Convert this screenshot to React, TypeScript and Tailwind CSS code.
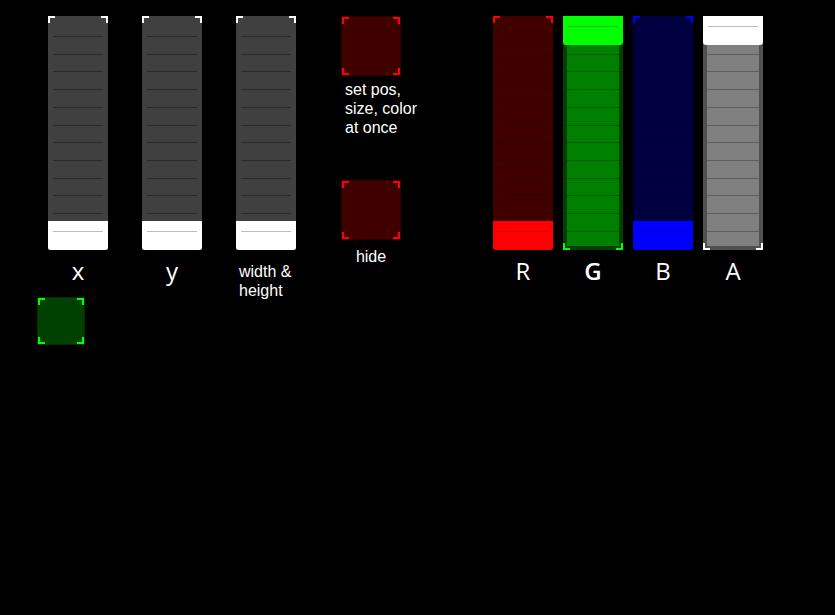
type Corner = 'tl' | 'tr' | 'bl' | 'br'

const cornerCls: Record<Corner, string> = {
  tl: 'top-0 left-0 border-t-2 border-l-2',
  tr: 'top-0 right-0 border-t-2 border-r-2',
  bl: 'bottom-0 left-0 border-b-2 border-l-2',
  br: 'bottom-0 right-0 border-b-2 border-r-2',
}

function Brackets({ corners, color }: { corners: Corner[]; color: string }) {
  return (
    <>
      {corners.map((c) => (
        <span key={c} className={`absolute w-[7px] h-[7px] ${cornerCls[c]} ${color}`} />
      ))}
    </>
  )
}

type FaderProps = {
  track: string
  frame?: string
  line: string
  handle: string
  handleLine: string
  bracket: string
  top?: boolean
}

function Fader({ track, frame, line, handle, handleLine, bracket, top }: FaderProps) {
  return (
    <div className={`relative w-[60px] h-[234px] ${frame ?? track}`}>
      {frame && <div className={`absolute left-[4px] right-[4px] top-0 bottom-[4px] ${track}`} />}
      <div className={`absolute inset-0 flex flex-col justify-between pt-[20px] pb-[18px] ${frame ? 'px-[4px]' : 'px-[5px]'}`}>
        {Array.from({ length: 12 }).map((_, i) => (
          <div key={i} className={`h-px ${line}`} />
        ))}
      </div>
      <div
        className={`absolute left-0 right-0 h-[29px] rounded-b-[3px] pt-[10px] px-[5px] ${handle} ${top ? 'top-0' : 'bottom-0'}`}
      >
        <div className={`h-px ${handleLine}`} />
      </div>
      <Brackets corners={top ? ['bl', 'br'] : ['tl', 'tr']} color={bracket} />
    </div>
  )
}

function Pad({ size, fill, edge, bracket }: { size: string; fill: string; edge: string; bracket: string }) {
  return (
    <div className={`relative ${size} ${fill} border ${edge}`}>
      <Brackets corners={['tl', 'tr', 'bl', 'br']} color={bracket} />
    </div>
  )
}

function Label({ children }: { children: string }) {
  return <div className="mt-[6px] text-center text-[24px] leading-[30px] text-white">{children}</div>
}

const small = 'text-[16px] leading-[19px] whitespace-nowrap font-["Liberation_Sans",Arial,sans-serif]'

const gray = {
  track: 'bg-[#404040]',
  line: 'bg-[#2a2a2a]',
  handle: 'bg-white',
  handleLine: 'bg-[#bdbdbd]',
  bracket: 'border-white',
}

export default function App() {
  return (
    <div
      className="w-[835px] h-[615px] bg-black overflow-hidden text-white"
      style={{ fontFamily: '"Open Sans", "DejaVu Sans", sans-serif' }}
    >
      <div className="flex items-start h-[297px] pt-4 pl-12">
        <div className="w-[60px]">
          <Fader {...gray} />
          <Label>x</Label>
        </div>
        <div className="w-[60px] ml-[34px]">
          <Fader {...gray} />
          <Label>y</Label>
        </div>
        <div className="w-[60px] ml-[34px]">
          <Fader {...gray} />
          <div className={`mt-[12px] pl-[3px] ${small}`}>
            <div>width &amp;</div>
            <div>height</div>
          </div>
        </div>

        <div className="w-[60px] ml-[45px]">
          <Pad size="w-[60px] h-[60px]" fill="bg-[#400000]" edge="border-[#300000]" bracket="border-[#ff0000]" />
          <div className={`h-[104px] pt-[4px] pl-[4px] ${small}`}>
            <div>set pos,</div>
            <div>size, color</div>
            <div>at once</div>
          </div>
          <Pad size="w-[60px] h-[60px]" fill="bg-[#400000]" edge="border-[#300000]" bracket="border-[#ff0000]" />
          <div className={`mt-[7px] text-center ${small}`}>hide</div>
        </div>

        <div className="w-[60px] ml-[92px]">
          <Fader
            track="bg-[#400000]"
            line="bg-[#300000]"
            handle="bg-[#ff0000]"
            handleLine="bg-[#c00000]"
            bracket="border-[#ff0000]"
          />
          <Label>R</Label>
        </div>
        <div className="w-[60px] ml-[10px]">
          <Fader
            track="bg-[#008000]"
            frame="bg-[#004000]"
            line="bg-[#005a00]"
            handle="bg-[#00ff00]"
            handleLine="bg-[#00c000]"
            bracket="border-[#00ff00]"
            top
          />
          <div className="mt-[6px] text-center text-[24px] leading-[30px] font-semibold">G</div>
        </div>
        <div className="w-[60px] ml-[10px]">
          <Fader
            track="bg-[#000040]"
            line="bg-[#000030]"
            handle="bg-[#0000ff]"
            handleLine="bg-[#0000c0]"
            bracket="border-[#0000ff]"
          />
          <Label>B</Label>
        </div>
        <div className="w-[60px] ml-[10px]">
          <Fader
            track="bg-[#808080]"
            frame="bg-[#505050]"
            line="bg-[#5e5e5e]"
            handle="bg-white"
            handleLine="bg-[#bdbdbd]"
            bracket="border-white"
            top
          />
          <Label>A</Label>
        </div>
      </div>

      <div className="pl-[37px]">
        <Pad size="w-[48px] h-[48px]" fill="bg-[#004000]" edge="border-[#003000]" bracket="border-[#00ff00]" />
      </div>
    </div>
  )
}
